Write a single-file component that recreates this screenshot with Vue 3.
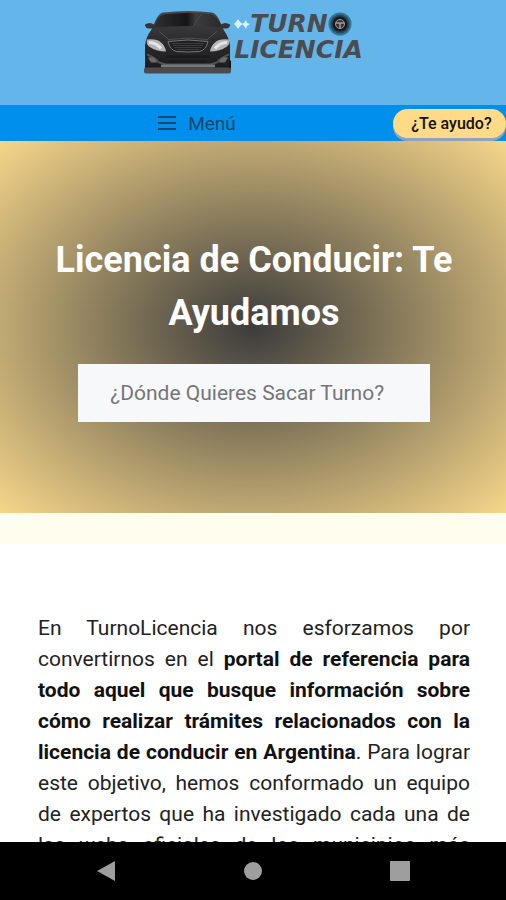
<script setup>
import { ref } from "vue";

const place = ref("");
</script>

<template>
  <div class="screen">
    <div class="page">
      <header class="header">
        <a href="#" class="logo">
          <svg class="car" viewBox="0 0 90 64" aria-hidden="true">
            <defs>
              <linearGradient id="body" x1="0" y1="0" x2="0" y2="1">
                <stop offset="0" stop-color="#48484a" />
                <stop offset="0.5" stop-color="#2c2c2e" />
                <stop offset="1" stop-color="#1c1c1e" />
              </linearGradient>
              <linearGradient id="glass" x1="0" y1="0" x2="1" y2="0">
                <stop offset="0" stop-color="#303032" />
                <stop offset="0.48" stop-color="#151517" />
                <stop offset="0.62" stop-color="#3c3c3e" />
                <stop offset="1" stop-color="#29292b" />
              </linearGradient>
            </defs>
            <path d="M2 50h18v12H4q-2-2-2-6zM70 50h18v7q0 4-3 5H70z" fill="#111113" />
            <path
              d="M20 2Q45-1 69 2q4 1 7 7l5 11q5 7 6 15v17q0 4-4 6H6q-4-2-4-6V35q1-9 6-15l5-11q3-6 7-7z"
              fill="url(#body)"
            />
            <path d="M21 4q24-3 47 0 6 1 11 13-34-3-68 0Q15 5 21 4z" fill="url(#glass)" />
            <path d="M58 4 50 16" stroke="#4c4c4f" fill="none" />
            <path d="M2 14q5-3 9 0l1 4H6q-4 0-4-4zM87 14q-5-3-9 0l-1 4h6q4 0 4-4z" fill="#343437" />
            <path d="M16 21l10 8q19-3 38 0l10-8" stroke="#505053" fill="none" />
            <path d="M4 29q10-1 14 3 4 3 5 9-10 0-17-5-3-2-2-7z" fill="#b4b4b4" />
            <path d="M86 29q-10-1-14 3-4 3-5 9 10 0 17-5 3-2 2-7z" fill="#b4b4b4" />
            <path d="M6 32q7 0 12 6M84 32q-7 0-12 6" stroke="#e6e6e6" stroke-width="3" fill="none" />
            <path d="M25 31q20-3 40 0-2 9-9 10-11 1-22 0-7-1-9-10z" fill="#1f1f21" stroke="#77777a" />
            <path d="M29 33h32M30 35h30M31 37h28M34 39h22" stroke="#3c3c3f" />
            <path d="M4 44q8 3 12 8l7 2h44l7-2q4-5 12-8" stroke="#515154" stroke-width="2" fill="none" />
            <path d="M23 46h44M26 51h38" stroke="#19191b" stroke-width="2" />
            <path d="M5 47q8-1 9 5H8zM85 47q-8-1-9 5h6z" fill="#6c6c6f" />
            <rect x="18" y="54" width="54" height="3" fill="#77777a" />
            <rect x="1" y="57" width="87" height="6" rx="2" fill="#4c4c4f" />
          </svg>
          <span class="brand">
            <span class="brand-top">
              <svg class="lights" viewBox="0 0 16 10" aria-hidden="true">
                <path
                  d="m4 0 2 3 3 2-3 2-2 3-2-3-2-2 2-2zm8 1 1 3 3 1-3 2-1 3-2-3-2-2 2-1z"
                  fill="#d9f2ff"
                />
              </svg>
              TURN
              <svg class="wheel" viewBox="0 0 24 24" role="img" aria-label="O">
                <circle cx="12" cy="12" r="11.5" fill="#347493" />
                <circle cx="12" cy="12" r="9.5" fill="#22495a" />
                <circle cx="12" cy="12" r="7.5" fill="#18191d" />
                <circle cx="12" cy="12" r="4.5" fill="#333" stroke="#a3989a" />
                <path d="M8 11h8M12 11v5" stroke="#a3989a" stroke-width="1.5" />
              </svg>
            </span>
            <span>LICENCIA</span>
          </span>
        </a>
      </header>

      <nav class="nav">
        <button type="button" class="menu">
          <svg class="menu-icon" viewBox="0 0 20 16" aria-hidden="true">
            <path d="M1 2h18M1 8h18M1 14h18" stroke="currentColor" stroke-width="2" />
          </svg>
          Menú
        </button>
        <a href="#" class="help">¿Te ayudo?</a>
      </nav>

      <section class="hero">
        <h1>Licencia de Conducir: Te Ayudamos</h1>
        <input
          v-model="place"
          type="text"
          class="search"
          placeholder="¿Dónde Quieres Sacar Turno?"
          aria-label="¿Dónde Quieres Sacar Turno?"
        />
      </section>

      <div class="strip"></div>

      <main class="content">
        <p>
          En TurnoLicencia nos esforzamos por convertirnos en el
          <strong>
            portal de referencia para todo aquel que busque información sobre cómo realizar trámites
            relacionados con la licencia de conducir en Argentina</strong
          >. Para lograr este objetivo, hemos conformado un equipo de expertos que ha investigado
          cada una de las webs oficiales de los municipios más importantes
        </p>
      </main>
    </div>

    <footer class="system">
      <button type="button" aria-label="Atrás">
        <svg viewBox="0 0 22 22"><path d="M2 11 20 1v20z" /></svg>
      </button>
      <button type="button" aria-label="Inicio">
        <svg viewBox="0 0 22 22"><circle cx="11" cy="11" r="9" /></svg>
      </button>
      <button type="button" aria-label="Recientes">
        <svg viewBox="0 0 22 22"><rect x="1" y="1" width="20" height="20" rx="1" /></svg>
      </button>
    </footer>
  </div>
</template>

<style>
body {
  margin: 0;
}
</style>

<style scoped>
.screen {
  display: flex;
  flex-direction: column;
  height: 100vh;
  overflow: hidden;

  background: #fff;
  color: #222;
  font-family: Roboto, sans-serif;
}

.page {
  flex: 1;
  min-height: 0;
  overflow: hidden;
}

.header {
  display: flex;
  justify-content: center;
  box-sizing: border-box;
  height: 105px;
  padding-top: 10px;

  background: #64b5e9;
}

.logo {
  display: flex;
  align-items: flex-start;
  gap: 1px;

  color: #4b4b50;
  text-decoration: none;
}

.car {
  width: 90px;
  height: 65px;
}

.brand {
  display: flex;
  flex-direction: column;
  padding-top: 1px;

  font-family: "DejaVu Sans", sans-serif;
  font-size: 25px;
  font-style: italic;
  font-weight: 700;
  line-height: 26px;
}

.brand-top {
  display: flex;
  align-items: center;
}

.lights {
  width: 16px;
  height: 10px;
}

.wheel {
  width: 24px;
  height: 24px;
}

.nav {
  display: flex;
  align-items: center;
  height: 36px;

  background: #008fec;
}

.menu {
  display: flex;
  flex: 1;
  align-items: center;
  justify-content: center;
  gap: 11px;
  padding: 0;

  background: none;
  border: 0;
  color: #17466b;
  cursor: pointer;
  font-family: inherit;
  font-size: 19px;
}

.menu-icon {
  width: 20px;
  height: 16px;
}

.help {
  box-sizing: border-box;
  width: 113px;
  padding-left: 4px;

  background: #ffdb87;
  border-radius: 15px;
  box-shadow: 0 3px 0 #8fa3bd;
  color: #111;
  font-size: 16px;
  font-weight: 500;
  line-height: 29px;
  text-align: center;
  text-decoration: none;
}

.hero {
  display: flex;
  flex-direction: column;
  align-items: center;
  gap: 24px;
  padding: 93px 50px 91px 52px;

  background: radial-gradient(ellipse at center, #3c3c3c, #f6d68a);
}

h1 {
  margin: 0;

  color: #fff;
  font-size: 36px;
  font-weight: 700;
  line-height: 53px;
  text-align: center;
}

.search {
  box-sizing: border-box;
  width: 87%;
  height: 58px;
  padding: 0 32px;

  background: #f7f8fa;
  border: 0;
  border-radius: 0;
  color: #333;
  font-family: inherit;
  font-size: 21px;
}

.search::placeholder {
  color: #757575;
  opacity: 1;
}

.strip {
  height: 31px;

  background: #fffeee;
}

.content {
  padding: 69px 36px 0 38px;
}

p {
  margin: 0;

  font-size: 21px;
  line-height: 31px;
  text-align: justify;
}

strong {
  color: #111;
  font-weight: 700;
}

.system {
  display: flex;
  align-items: center;
  justify-content: space-between;
  height: 58px;
  padding: 0 95px;

  background: #000;
}

.system button {
  display: flex;
  padding: 0;

  background: none;
  border: 0;
  cursor: pointer;
}

.system svg {
  width: 22px;
  height: 22px;

  fill: #9e9e9e;
}
</style>
